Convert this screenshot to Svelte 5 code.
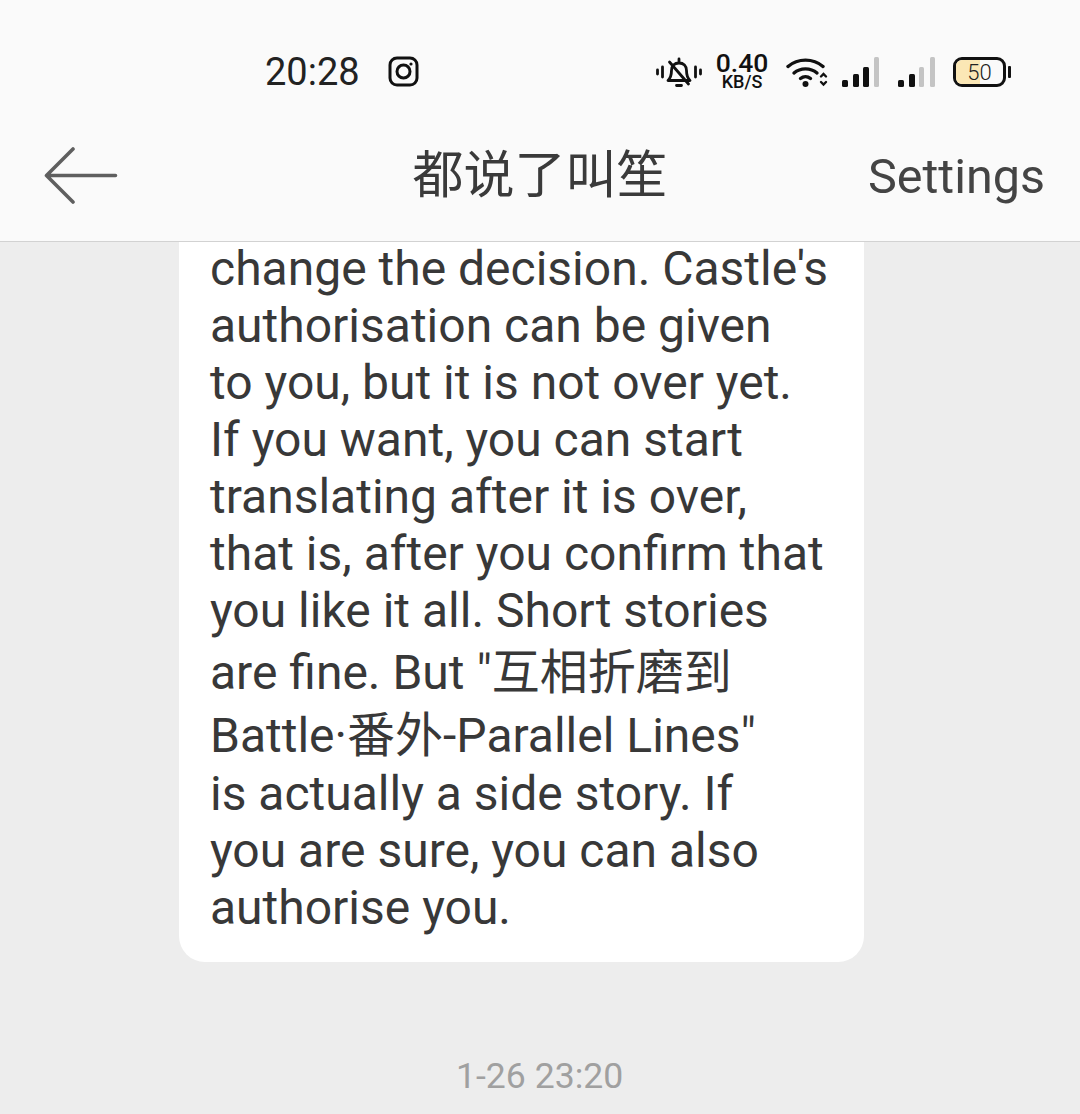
<script>
  const lines = [
    "change the decision. Castle's",
    "authorisation can be given",
    "to you, but it is not over yet.",
    "If you want, you can start",
    "translating after it is over,",
    "that is, after you confirm that",
    "you like it all. Short stories",
  ];
  const cjkLines = ['are fine. But "互相折磨到', 'Battle·番外-Parallel Lines"'];
  const tail = ["is actually a side story. If", "you are sure, you can also", "authorise you."];
</script>

<div class="screen">
  <header class="top">
    <div class="status">
      <span class="time">20:28</span>
      <svg class="insta" width="32" height="32" viewBox="0 0 32 32" fill="none" stroke="#111" stroke-width="3">
        <rect x="2" y="2" width="27" height="27" rx="7" />
        <circle cx="15.500" cy="15.500" r="6.500" />
        <circle cx="23" cy="8" r="1.600" fill="#111" stroke="none" />
      </svg>
      <div class="right">
        <svg class="bell" width="46" height="32" viewBox="0 0 46 32" fill="none" stroke="#111" stroke-width="2.800" stroke-linecap="round" stroke-linejoin="round">
          <path d="M1.500 14v4M6.500 11v10M39.500 11v10M44.500 14v4" />
          <path d="M12 24.500c3-3 3.500-5.500 3.500-10 0-4.500 3-7.500 7.500-7.500s7.500 3 7.500 7.500c0 4.500.5 7 3.500 10z" />
          <path d="M23 3v2.500M20.500 29.500h5" />
          <path d="M13.500 6l19 22" />
        </svg>
        <div class="speed"><span class="rate">0.40</span><span class="unit">KB/S</span></div>
        <svg class="wifi" width="42" height="32" viewBox="0 0 42 32" fill="none" stroke="#111" stroke-width="3.400" stroke-linecap="round">
          <path d="M2 10.500c10-8.500 25-8.500 35 0" />
          <path d="M8 17c6.500-5.500 16.500-5.500 23 0" />
          <path d="M14.500 22.500c3-2.500 7-2.500 10 0" />
          <circle cx="19.500" cy="28" r="3" fill="#111" stroke="none" />
          <path d="M35 20.500l2.500-2.500 2.500 2.500M35 26l2.500 2.500 2.500-2.500" stroke-width="2.400" />
        </svg>
        <svg class="bars" width="38" height="32" viewBox="0 0 38 32">
          <rect x="1" y="24" width="6" height="7" rx="1.500" fill="#111" />
          <rect x="12" y="18" width="6" height="13" rx="1.500" fill="#111" />
          <rect x="22" y="11" width="6" height="20" rx="1.500" fill="#111" />
          <rect x="33" y="1" width="5" height="30" rx="1.500" fill="#c4c4c4" />
        </svg>
        <svg class="bars" width="38" height="32" viewBox="0 0 38 32">
          <rect x="1" y="24" width="6" height="7" rx="1.500" fill="#111" />
          <rect x="12" y="18" width="6" height="13" rx="1.500" fill="#111" />
          <rect x="22" y="11" width="5" height="20" rx="1.500" fill="#c4c4c4" />
          <rect x="33" y="1" width="5" height="30" rx="1.500" fill="#c4c4c4" />
        </svg>
        <div class="battery">
          <div class="shell"><div class="fill" style="width: 50%"></div><span>50</span></div>
          <div class="nub"></div>
        </div>
      </div>
    </div>
    <div class="title-row">
      <svg class="back" width="74" height="58" viewBox="0 0 74 58" fill="none" stroke="#5f5f5f" stroke-width="3.600" stroke-linecap="round" stroke-linejoin="round">
        <path d="M29 2L2.500 28.500 29 55M2.500 28.500h69" />
      </svg>
      <span class="title">都说了叫笙</span>
      <span class="settings">Settings</span>
    </div>
  </header>

  <main class="feed">
    <div class="bubble">
      {#each lines as l}
        <div class="line">{l}</div>
      {/each}
      {#each cjkLines as l}
        <div class="line tall">{l}</div>
      {/each}
      {#each tail as l}
        <div class="line">{l}</div>
      {/each}
    </div>
    <div class="stamp">1-26 23:20</div>
  </main>
</div>

<style>
  :global(body) {
    margin: 0;
    background: #ededed;
  }

  .screen {
    width: 1080px;
    height: 1114px;
    overflow: hidden;
    font-family: Roboto, "Noto Sans CJK SC", sans-serif;
    background: #ededed;
  }

  .top {
    height: 241px;
    background: #fafafa;
    border-bottom: 1px solid #d2d2d2;
  }

  .status {
    height: 126px;
    padding: 18px 69px 0 265px;
    box-sizing: border-box;
    display: flex;
    align-items: center;
    color: #111;
  }

  .time {
    font-size: 38px;
    width: 123px;
    color: #222;
  }

  .right {
    margin-left: auto;
    display: flex;
    align-items: center;
  }

  .bell {
    margin-right: 13px;
  }

  .speed {
    display: flex;
    flex-direction: column;
    align-items: center;
    width: 54px;
    margin-right: 17px;
    line-height: 1;
  }

  .rate {
    font-size: 26.500px;
    font-weight: 500;
    line-height: 22px;
    margin-top: -2px;
  }

  .unit {
    font-size: 18px;
    font-weight: 500;
    line-height: 16px;
  }

  .wifi {
    margin-right: 13px;
  }

  .bars {
    margin-right: 18px;
  }

  .battery {
    display: flex;
    align-items: center;
    gap: 2px;
  }

  .shell {
    position: relative;
    width: 53px;
    height: 30px;
    border: 3px solid #111;
    border-radius: 9px;
    box-sizing: border-box;
    overflow: hidden;
    display: flex;
    align-items: center;
    justify-content: center;
    font-size: 22px;
    font-weight: 300;
    color: #222;
  }

  .fill {
    position: absolute;
    left: 0;
    top: 0;
    bottom: 0;
    background: #fbe7b5;
  }

  .shell span {
    position: relative;
  }

  .nub {
    width: 3px;
    height: 12px;
    background: #111;
    border-radius: 1px;
  }

  .title-row {
    height: 115px;
    position: relative;
    display: flex;
    align-items: center;
    justify-content: center;
  }

  .back {
    position: absolute;
    left: 44px;
    top: 21px;
  }

  .title {
    font-size: 51px;
    color: #3a3a3a;
    margin-top: -25px;
  }

  .settings {
    position: absolute;
    right: 35px;
    top: 22px;
    font-size: 48.500px;
    color: #444;
  }

  .feed {
    padding-left: 179px;
  }

  .bubble {
    width: 685px;
    box-sizing: border-box;
    padding: 0 0 24px 31px;
    background: #fff;
    border-radius: 0 0 26px 26px;
    font-size: 48px;
    color: #383838;
  }

  .line {
    height: 57px;
    line-height: 53px;
    white-space: nowrap;
  }

  .tall {
    height: 63px;
    line-height: 63px;
  }

  .stamp {
    margin: 93px 0 0 277px;
    font-size: 35.600px;
    color: #a0a0a0;
  }
</style>
